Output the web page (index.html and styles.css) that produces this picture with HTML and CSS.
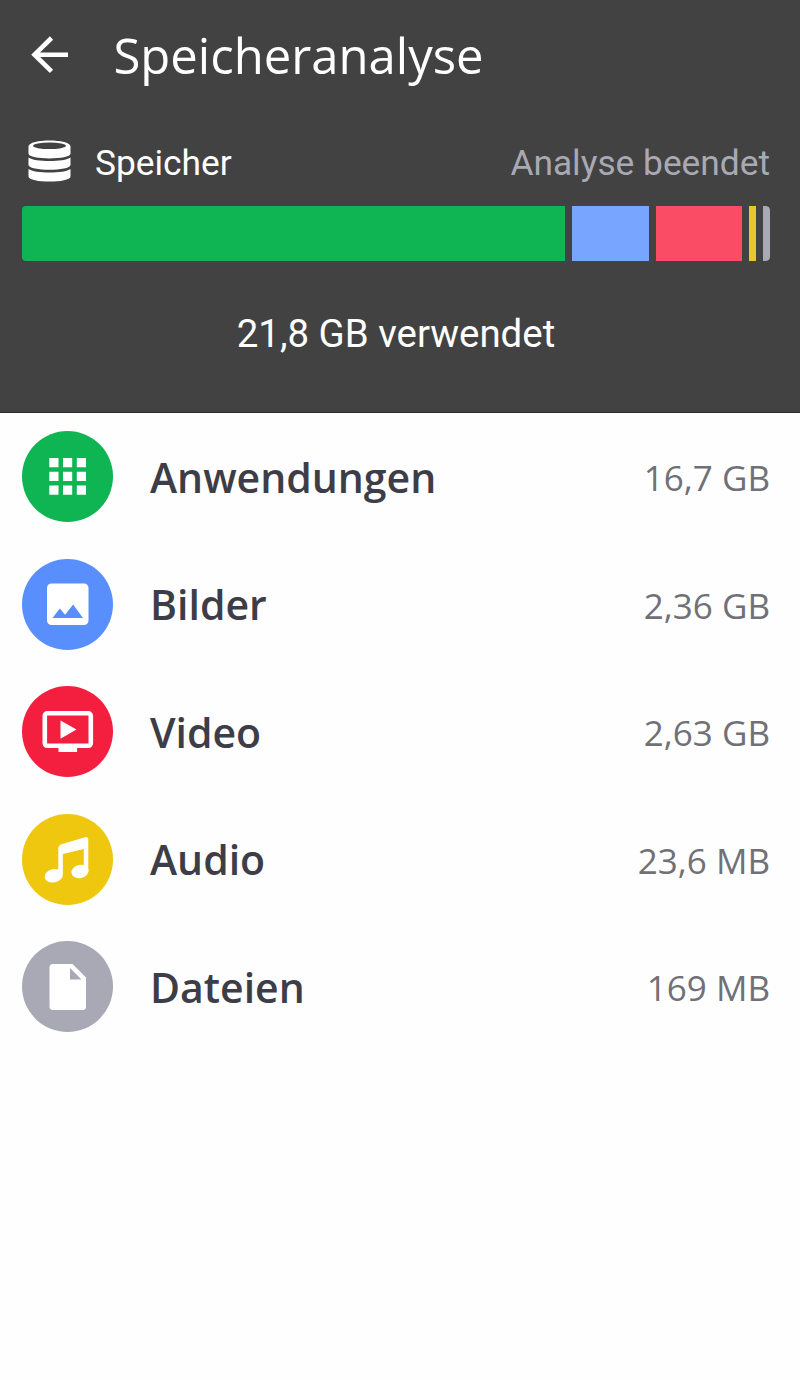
FILE: index.html
```html
<!DOCTYPE html>
<html lang="de">
<head>
<meta charset="utf-8">
<title>Speicheranalyse</title>
<link rel="stylesheet" href="styles.css">
</head>
<body>
<header class="header">
  <div class="toolbar">
    <svg class="back" viewBox="0 0 40 40"><path d="M38 19.700H4.500M21.500 3L4.500 19.700L21.500 36.400" fill="none" stroke="currentColor" stroke-width="4.600"/></svg>
    <h1 class="title">Speicheranalyse</h1>
  </div>
  <div class="status">
    <svg class="disk" viewBox="0 0 44 44"><path d="M.5 6.500C.5-1.500 42.500-1.500 42.500 6.500V13.500C42.500 20 .5 20 .5 13.500Z" fill="currentColor"/><ellipse cx="21.500" cy="5.800" rx="16.500" ry="3.300" fill="#424242"/><path d="M.5 17.500C6.500 22.300 36.500 22.300 42.500 17.500V25C42.500 31.300 .5 31.300 .5 25ZM.5 29C6.500 33.800 36.500 33.800 42.500 29V36.500C42.500 43.300 .5 43.300 .5 36.500Z" fill="currentColor"/></svg>
    <span class="storage">Speicher</span>
    <span class="state">Analyse beendet</span>
  </div>
  <div class="bar">
    <div class="seg apps"></div>
    <div class="seg images"></div>
    <div class="seg video"></div>
    <div class="seg audio"></div>
    <div class="seg files"></div>
  </div>
  <p class="used">21,8 GB verwendet</p>
</header>
<ul class="list">
  <li class="row">
    <svg class="icon" viewBox="0 0 91 91"><circle cx="45.500" cy="45.500" r="45.500" fill="#10b553"/><path d="M27.300 27h9.200v9.200h-9.200zM41 27h9.200v9.200H41zM54.800 27H64v9.200h-9.200zM27.300 40.800h9.200V50h-9.200zM41 40.800h9.200V50H41zM54.800 40.800H64V50h-9.200zM27.300 54.600h9.200v9.200h-9.200zM41 54.600h9.200v9.200H41zM54.800 54.600H64v9.200h-9.200z" fill="#fff"/></svg>
    <span class="label">Anwendungen</span><span class="size">16,7 GB</span>
  </li>
  <li class="row">
    <svg class="icon" viewBox="0 0 91 91"><circle cx="45.500" cy="45.500" r="45.500" fill="#588ffd"/><rect x="25" y="24.500" width="41.500" height="41.500" rx="4.500" fill="#fff"/><path d="M30.500 59l7.300-9.500 5.300 6.300 8-10.300L61 59z" fill="#588ffd"/></svg>
    <span class="label">Bilder</span><span class="size">2,36 GB</span>
  </li>
  <li class="row">
    <svg class="icon" viewBox="0 0 91 91"><circle cx="45.500" cy="45.500" r="45.500" fill="#f41f3f"/><rect x="22.800" y="27.300" width="46" height="32.500" rx="2.500" fill="none" stroke="#fff" stroke-width="4.600"/><path d="M36.500 60h18.600v6H36.500zM38.500 34.500v18.300L54.500 43.600z" fill="#fff"/></svg>
    <span class="label">Video</span><span class="size">2,63 GB</span>
  </li>
  <li class="row">
    <svg class="icon" viewBox="0 0 91 91"><circle cx="45.500" cy="45.500" r="45.500" fill="#eec70e"/><path d="M36.300 34.500Q36.300 31.200 39.500 30.200L63 23.200Q66.300 22.300 66.300 25.500V57H61.800V35L40.800 40V61H36.300Z" fill="#fff"/><ellipse cx="31.700" cy="61.800" rx="9.200" ry="6.600" transform="rotate(-12 31.700 61.800)" fill="#fff"/><ellipse cx="58" cy="57.500" rx="8.700" ry="6.600" transform="rotate(-12 58 57.500)" fill="#fff"/></svg>
    <span class="label">Audio</span><span class="size">23,6 MB</span>
  </li>
  <li class="row">
    <svg class="icon" viewBox="0 0 91 91"><circle cx="45.500" cy="45.500" r="45.500" fill="#a9a9b6"/><path d="M31 23H50.500L64 36.500V65.500Q64 69 60.500 69H31Q27.500 69 27.500 65.500V26.500Q27.500 23 31 23Z" fill="#fff"/><path d="M48 27V38.500H59.500Z" fill="#a9a9b6"/></svg>
    <span class="label">Dateien</span><span class="size">169 MB</span>
  </li>
</ul>
</body>
</html>
```
FILE: styles.css
```css
* { box-sizing: border-box; }
body {
  margin: 0;
  background: #fefefe;
  font-family: "Open Sans", "Noto Sans", sans-serif;
}
.header {
  height: 413px;
  padding: 24px 30px 0 22px;
  background: #424242;
  border-bottom: 1px solid #2c2c2c;
  color: #fff;
}
.toolbar {
  display: flex;
  align-items: center;
  height: 62px;
}
.back {
  width: 40px;
  height: 40px;
  margin-left: 8px;
}
.title {
  margin: 0 0 0 43.5px;
  font-size: 49px;
  line-height: 62px;
  font-weight: 400;
}
.status {
  display: flex;
  align-items: center;
  height: 50px;
  margin-top: 51px;
  font-family: Roboto, sans-serif;
  font-size: 35.3px;
  line-height: 50px;
}
.disk {
  width: 44px;
  height: 44px;
  margin-left: 6px;
}
.storage {
  margin-left: 23px;
  padding-top: 2px;
}
.state {
  margin-left: auto;
  padding-top: 2px;
  color: #a9a9b4;
}
.bar {
  display: flex;
  gap: 6.8px;
  height: 55px;
  margin-top: 19px;
  border-radius: 4px;
  overflow: hidden;
}
.seg { flex: none; }
.apps { width: 543.4px; background: #10b553; }
.images { width: 77px; background: #78a5ff; }
.video { width: 86.5px; background: #fa4c65; }
.audio { width: 7px; background: #e8c72c; }
.files { flex: 1; background: #a9a9b6; border-radius: 0 4px 4px 0; }
.used {
  margin: 48px 0 0;
  font-family: Roboto, sans-serif;
  font-size: 38.4px;
  line-height: 50px;
  text-align: center;
}
.list {
  margin: 0;
  padding: 18px 30px 0 22px;
  list-style: none;
}
.row {
  display: flex;
  align-items: center;
  height: 91px;
  margin-bottom: 36.6px;
}
.icon {
  width: 91px;
  height: 91px;
}
.label {
  margin-left: 37px;
  color: #3d3d47;
  font-size: 41px;
  font-weight: 600;
}
.size {
  margin-left: auto;
  padding-top: 2px;
  color: #707076;
  font-size: 35px;
}
```
